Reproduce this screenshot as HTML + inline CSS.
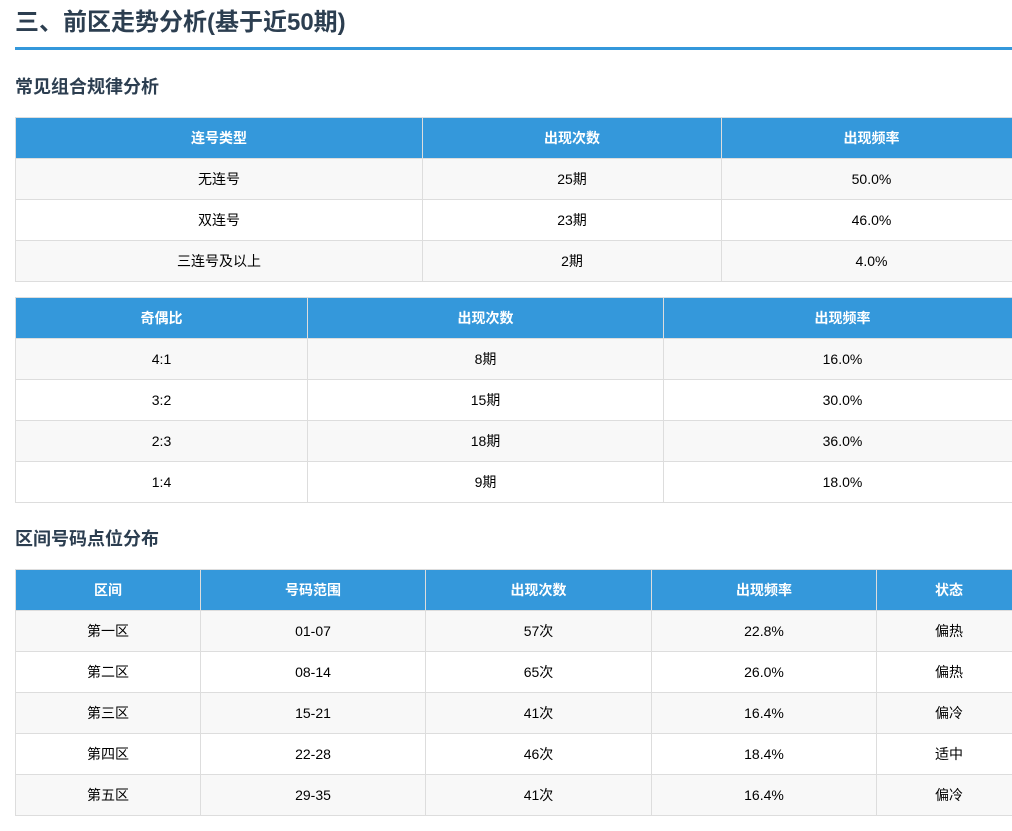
<!DOCTYPE html>
<html><head><meta charset="utf-8"><style>
html,body{margin:0;padding:0;width:1012px;height:831px;overflow:hidden;background:#fff;font-family:"Liberation Sans","Noto Sans CJK SC",sans-serif;}
.wrap{position:relative;left:15px;width:1007px;}
h2{margin:0;position:absolute;top:6px;left:0;font-size:24px;color:#2c3e50;font-weight:bold;line-height:34px;}
.line{position:absolute;top:47px;left:0;width:1007px;height:3px;background:#3498db;}
h3{margin:0;position:absolute;left:0;font-size:18px;color:#2c3e50;font-weight:bold;line-height:24px;}
table{position:absolute;left:0;border-collapse:collapse;width:1007px;table-layout:fixed;font-size:14px;}
th,td{border:1px solid #ddd;text-align:center;height:40px;padding:0;}
th{background:#3498db;color:#fff;font-weight:bold;}
tr:nth-child(even) td{background:#f8f8f8;}
td{color:#000;}
</style></head><body><div class="wrap">
<h2>三、前区走势分析(基于近50期)</h2>
<div class="line"></div>
<h3 style="top:75px">常见组合规律分析</h3>
<table style="top:117px"><colgroup><col style="width:407px"><col style="width:299px"><col></colgroup>
<tr><th>连号类型</th><th>出现次数</th><th>出现频率</th></tr>
<tr><td>无连号</td><td>25期</td><td>50.0%</td></tr>
<tr><td>双连号</td><td>23期</td><td>46.0%</td></tr>
<tr><td>三连号及以上</td><td>2期</td><td>4.0%</td></tr>
</table>
<table style="top:297px"><colgroup><col style="width:292px"><col style="width:356px"><col></colgroup>
<tr><th>奇偶比</th><th>出现次数</th><th>出现频率</th></tr>
<tr><td>4:1</td><td>8期</td><td>16.0%</td></tr>
<tr><td>3:2</td><td>15期</td><td>30.0%</td></tr>
<tr><td>2:3</td><td>18期</td><td>36.0%</td></tr>
<tr><td>1:4</td><td>9期</td><td>18.0%</td></tr>
</table>
<h3 style="top:527px">区间号码点位分布</h3>
<table style="top:569px"><colgroup><col style="width:185px"><col style="width:225px"><col style="width:226px"><col style="width:225px"><col></colgroup>
<tr><th>区间</th><th>号码范围</th><th>出现次数</th><th>出现频率</th><th>状态</th></tr>
<tr><td>第一区</td><td>01-07</td><td>57次</td><td>22.8%</td><td>偏热</td></tr>
<tr><td>第二区</td><td>08-14</td><td>65次</td><td>26.0%</td><td>偏热</td></tr>
<tr><td>第三区</td><td>15-21</td><td>41次</td><td>16.4%</td><td>偏冷</td></tr>
<tr><td>第四区</td><td>22-28</td><td>46次</td><td>18.4%</td><td>适中</td></tr>
<tr><td>第五区</td><td>29-35</td><td>41次</td><td>16.4%</td><td>偏冷</td></tr>
</table>
</div></body></html>
